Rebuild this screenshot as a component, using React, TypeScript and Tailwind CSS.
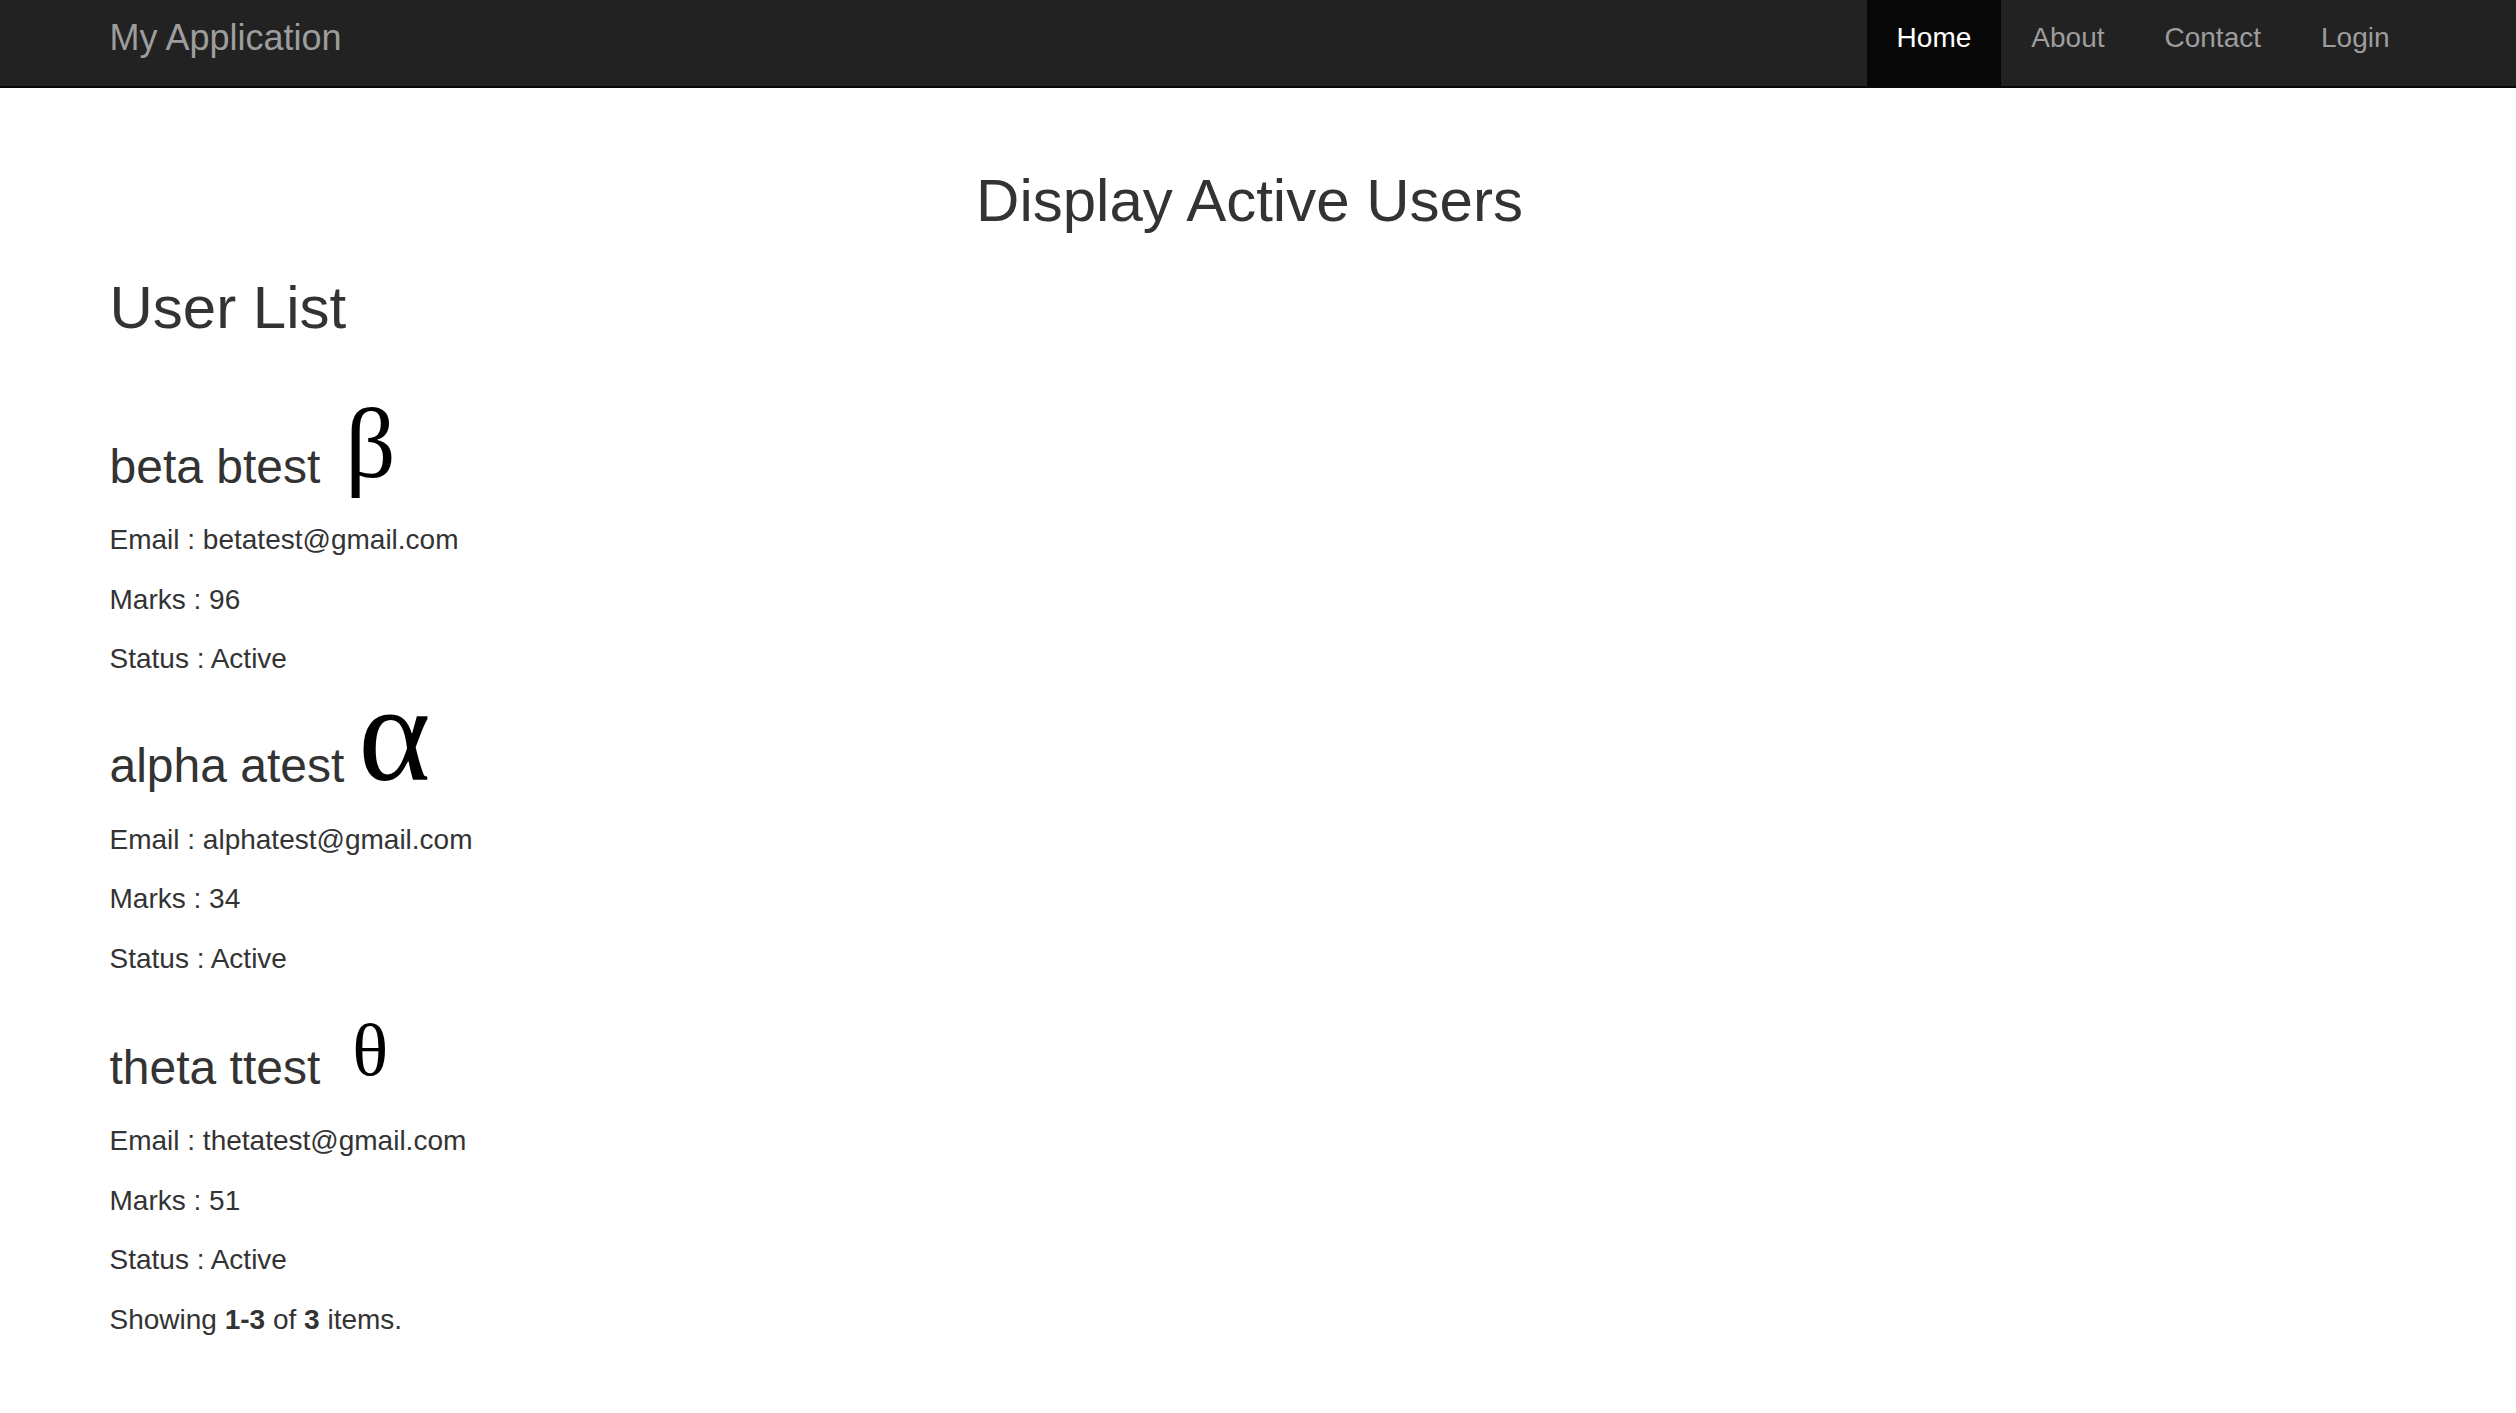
const navLinks = ['Home', 'About', 'Contact', 'Login']

interface User {
  name: string
  email: string
  marks: number
  status: string
  glyph: string
}

const users: User[] = [
  { name: 'beta btest', email: 'betatest@gmail.com', marks: 96, status: 'Active', glyph: 'β' },
  { name: 'alpha atest', email: 'alphatest@gmail.com', marks: 34, status: 'Active', glyph: 'α' },
  { name: 'theta ttest', email: 'thetatest@gmail.com', marks: 51, status: 'Active', glyph: 'θ' },
]

// per-user heading box: height, top margin and greek glyph placement
const headingStyles = [
  { box: 'h-[118px] mt-[40px]', glyph: 'text-[99px] ml-[25px] mb-[6px]' },
  { box: 'h-[79px] mt-[40px]', glyph: 'text-[138px] ml-[14px] -mb-[5px]' },
  { box: 'h-[81px] mt-[40px]', glyph: 'text-[75px] ml-[32px] mb-[13px]' },
]

function Navbar() {
  return (
    <nav className="h-[88px] border-b-2 border-[#080808] bg-[#222222]">
      <div className="ml-[79.5px] flex h-full w-[2340px] items-stretch justify-between">
        <a className="pl-[30px] pt-[17.5px] text-[36px] leading-[40px] text-[#9d9d9d]">
          My Application
        </a>
        <ul className="flex h-full">
          {navLinks.map((link) => (
            <li
              key={link}
              className={
                link === 'Home'
                  ? 'h-full bg-[#080808] px-[30px] pt-[17.5px] text-[28px] leading-[40px] text-white'
                  : 'h-full px-[30px] pt-[17.5px] text-[28px] leading-[40px] text-[#9d9d9d]'
              }
            >
              {link}
            </li>
          ))}
        </ul>
      </div>
    </nav>
  )
}

function UserItem({ user, index }: { user: User; index: number }) {
  const style = headingStyles[index]
  return (
    <div className="flex flex-col">
      {/* 이름 + 그리스 문자 */}
      <h3 className={`flex items-end ${style.box}`}>
        <span className="mb-[5px] text-[48px] leading-[52.8px]">{user.name}</span>
        <span
          className={`leading-none text-black ${style.glyph}`}
          style={{ fontFamily: '"Liberation Serif", "DejaVu Serif", serif' }}
        >
          {user.glyph}
        </span>
      </h3>
      <p className="mt-[21.5px] leading-[40px]">Email : {user.email}</p>
      <p className="mt-[19.5px] leading-[40px]">Marks : {user.marks}</p>
      <p className="mt-[19.5px] leading-[40px]">Status : {user.status}</p>
    </div>
  )
}

export default function App() {
  return (
    <div
      className="min-h-[1413px] bg-white text-[28px] text-[#333333]"
      style={{ fontFamily: '"Liberation Sans", Arial, sans-serif' }}
    >
      <Navbar />

      <main className="ml-[79.5px] flex w-[2340px] flex-col px-[30px]">
        <h2 className="mt-[80px] text-center text-[60px] leading-[66px]">
          Display Active Users
        </h2>
        <h2 className="mt-[40.5px] text-[60px] leading-[66px]">User List</h2>

        {users.map((user, i) => (
          <UserItem key={user.email} user={user} index={i} />
        ))}

        <p className="mt-[19.5px] leading-[40px]">
          Showing <b>1-3</b> of <b>3</b> items.
        </p>
      </main>
    </div>
  )
}
